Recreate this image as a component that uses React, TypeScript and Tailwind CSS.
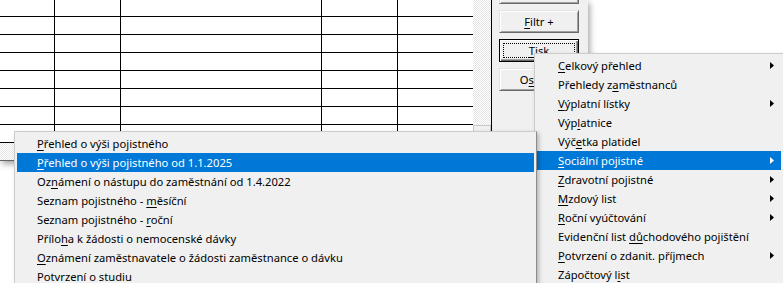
import React from "react";

type Item = { pre: string; u: string; post: string; sub?: boolean; active?: boolean };

const L = (s: string, sub = false, active = false): Item => {
  const m = s.match(/^(.*?)\[(.+?)\](.*)$/);
  if (!m) return { pre: s, u: "", post: "", sub, active };
  return { pre: m[1], u: m[2], post: m[3], sub, active };
};

const leftItems: Item[] = [
  L("[P]řehled o výši pojistného"),
  L("[P]řehled o výši pojistného od 1.1.2025", false, true),
  L("Oz[n]ámení o nástupu do zaměstnání od 1.4.2022"),
  L("Seznam pojistného - [m]ěsíční"),
  L("Seznam pojistného - [r]oční"),
  L("Přílo[h]a k žádosti o nemocenské dávky"),
  L("[O]známení zaměstnavatele o žádosti zaměstnance o dávku"),
  L("Potvrzení o [s]tudiu"),
];

const rightItems: Item[] = [
  L("[C]elkový přehled", true),
  L("Přehledy z[a]městnanců"),
  L("[V]ýplatní lístky", true),
  L("Výp[l]atnice"),
  L("Výč[e]tka platidel"),
  L("[S]ociální pojistné", true, true),
  L("[Z]dravotní pojistné", true),
  L("[M]zdový list", true),
  L("[R]oční vyúčtování", true),
  L("Evidenční list [dů]chodového pojištění"),
  L("[P]otvrzení o zdanit. příjmech", true),
  L("Zápočtový l[i]st"),
];

function Label({ it }: { it: Item }) {
  return (
    <span className="whitespace-pre">
      {it.pre}
      {it.u && <span className="underline decoration-1 underline-offset-[2px]">{it.u}</span>}
      {it.post}
    </span>
  );
}

function Arrow({ white }: { white?: boolean }) {
  return (
    <svg width="4" height="7" viewBox="0 0 4 7" className="shrink-0">
      <polygon points="0,0 4,3.5 0,7" fill={white ? "#ffffff" : "#000000"} />
    </svg>
  );
}

function MenuRow({ it, textPad }: { it: Item; textPad: string }) {
  return (
    <div
      className={
        "h-[19px] flex items-center pr-[7px] " +
        textPad +
        (it.active ? " bg-[#0078d7] text-white" : " text-black")
      }
    >
      <div className="flex-1 leading-none">
        <Label it={it} />
      </div>
      {it.sub && <Arrow white={it.active} />}
    </div>
  );
}

function Btn({ children, focus }: { children?: React.ReactNode; focus?: boolean }) {
  return (
    <div
      className={
        "h-[23px] w-[80px] shrink-0 relative flex items-center justify-center text-black bg-[#f0f0f0] " +
        (focus
          ? "border border-black shadow-[inset_1px_1px_0_#ffffff,inset_-1px_-1px_0_#696969,inset_-2px_-2px_0_#a0a0a0]"
          : "border-t border-l border-[#e3e3e3] border-r border-b border-r-[#696969] border-b-[#696969] shadow-[inset_1px_1px_0_#ffffff,inset_-1px_-1px_0_#a0a0a0]")
      }
    >
      {focus && <div className="absolute inset-[3px] border border-dotted border-black" />}
      {children && <span className="relative leading-none">{children}</span>}
    </div>
  );
}

const hatch =
  "bg-[conic-gradient(#e6e6e6_25%,#ffffff_0_50%,#e6e6e6_0_75%,#ffffff_0)] bg-[length:2px_2px]";

export default function App() {
  const colW = ["w-[55px]", "w-[66px]", "w-[201px]", "w-[76px]", "w-[75px]"];
  const rowH = ["h-[17px]", "h-[18px]", "h-[18px]", "h-[18px]", "h-[18px]", "h-[18px]", "h-[18px]", "h-[18px]"];
  return (
    <div
      className="relative w-[783px] h-[283px] overflow-hidden bg-white text-[11.2px]"
      style={{ fontFamily: "'Noto Sans', 'Open Sans', sans-serif" }}
    >
      {/* underlying window */}
      <div className="w-[588px] h-[161px] flex shadow-[2px_3px_6px_rgba(0,0,0,0.35)]">
        <div className="w-[491px] flex flex-col">
          <div className="flex h-[142px]">
            <div className="w-[473px] flex flex-col bg-white overflow-hidden">
              {rowH.map((h, r) => (
                <div key={r} className={"flex shrink-0 border-b border-black " + h}>
                  {colW.map((w, c) => (
                    <div key={c} className={w + (c < 4 ? " border-r border-black" : "")} />
                  ))}
                </div>
              ))}
            </div>
            <div className={"w-[18px] flex flex-col justify-end " + hatch}>
              <div className="h-[17px] bg-[#f0f0f0] border border-[#c8c8c8]" />
            </div>
          </div>
          <div className={"h-[18px] border-t border-black " + hatch} />
          <div className="h-[1px] bg-[#646464]" />
        </div>
        <div className="w-[1px] bg-black" />
        <div className="flex-1 bg-[#f0f0f0] pl-[7px] flex flex-col gap-[6px] overflow-hidden">
          <div className="mt-[-19px]">
            <Btn />
          </div>
          <Btn>
            <span className="underline decoration-1 underline-offset-[2px]">F</span>iltr +
          </Btn>
          <Btn focus>
            <span className="underline decoration-1 underline-offset-[2px]">T</span>isk
          </Btn>
          <Btn>
            O<span className="underline decoration-1 underline-offset-[2px]">s</span>tatní
          </Btn>
        </div>
      </div>

      {/* parent menu (Tisk) */}
      <div className="absolute left-[534px] top-[53px] w-[250px] bg-[#f0f0f0] border border-[#cccccc] p-[2px] shadow-[2px_2px_4px_rgba(0,0,0,0.25)]">
        {rightItems.map((it, i) => (
          <MenuRow key={i} it={it} textPad="pl-[21px]" />
        ))}
      </div>

      {/* submenu (Sociální pojistné) */}
      <div className="absolute left-[14px] top-[131px] w-[523px] bg-[#f0f0f0] border border-[#cccccc] border-r-[#8c8c8c] p-[2px] shadow-[2px_2px_4px_rgba(0,0,0,0.25)]">
        {leftItems.map((it, i) => (
          <MenuRow key={i} it={it} textPad="pl-[20px]" />
        ))}
      </div>
    </div>
  );
}
